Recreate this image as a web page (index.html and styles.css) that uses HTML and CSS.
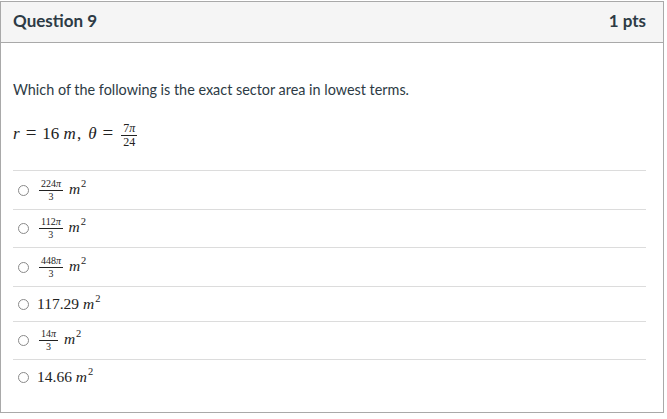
FILE: index.html
```html
<!DOCTYPE html>
<html>
<head>
<meta charset="utf-8">
<link rel="stylesheet" href="styles.css">
</head>
<body>
<div class="card">
  <div class="header">
    <span class="title">Question 9</span>
    <span class="pts">1 pts</span>
  </div>
  <div class="body">
    <p class="prompt">Which of the following is the exact sector area in lowest terms.</p>
    <p class="math given"><i>r</i><span class="rel">=</span>16 <i class="m">m</i>,<span class="sp"></span><i>θ</i><span class="rel">=</span><span class="frac big"><span class="num">7<i>π</i></span><span class="den">24</span></span></p>
    <div class="answers">
      <div class="answer"><span class="radio"></span><span class="math"><span class="frac"><span class="num">224<i>π</i></span><span class="den">3</span></span> <i class="m">m</i><sup>2</sup></span></div>
      <div class="answer a2"><span class="radio"></span><span class="math"><span class="frac"><span class="num">112<i>π</i></span><span class="den">3</span></span> <i class="m">m</i><sup>2</sup></span></div>
      <div class="answer"><span class="radio"></span><span class="math"><span class="frac"><span class="num">448<i>π</i></span><span class="den">3</span></span> <i class="m">m</i><sup>2</sup></span></div>
      <div class="answer plain"><span class="radio"></span><span class="math">117.29 <i class="m">m</i><sup>2</sup></span></div>
      <div class="answer a5"><span class="radio"></span><span class="math"><span class="frac"><span class="num">14<i>π</i></span><span class="den">3</span></span> <i class="m">m</i><sup>2</sup></span></div>
      <div class="answer plain"><span class="radio"></span><span class="math">14.66 <i class="m">m</i><sup>2</sup></span></div>
    </div>
  </div>
</div>
</body>
</html>
```
FILE: styles.css
```css
* { box-sizing: border-box; }
html, body { margin: 0; padding: 0; background: #fff; }
body { font-family: Lato, "Liberation Sans", sans-serif; color: #2d3b45; }
.card {
  width: 664px;
  height: 412px;
  margin-top: 1px;
  border: 1px solid #a9a9a9;
}
.header {
  height: 41px;
  display: flex;
  align-items: flex-start;
  justify-content: space-between;
  padding: 9px 17px 0 12px;
  background: #f5f5f5;
  border-bottom: 1px solid #a9a9a9;
  font-weight: bold;
  font-size: 17px;
  line-height: 20px;
}
.body { padding: 0 17px 0 12px; }
.prompt {
  margin: 37px 0 0 0;
  font-size: 14.4px;
  line-height: 20px;
}
.math {
  font-family: "Liberation Serif", "DejaVu Serif", serif;
  font-size: 15.5px;
  color: #222;
}
.math i { font-style: italic; }
.math .m { letter-spacing: 1px; }
.given { margin: 19px 0 0 0; line-height: 28px; font-size: 17px; }
.rel { margin: 0 6px; font-size: 19px; }
.sp { display: inline-block; width: 7px; }
.frac {
  display: inline-flex;
  flex-direction: column;
  align-items: center;
  vertical-align: middle;
  font-size: 10px;
  line-height: 10px;
  margin: 0 2px;
}
.frac .num { border-bottom: 1px solid #222; padding: 0 2px 1px; }
.frac .den { padding-top: 1px; }
.frac.big { font-size: 12px; line-height: 11px; }
sup { font-size: 10.5px; vertical-align: 7px; line-height: 0; }
.answers { margin-top: 22px; }
.answer {
  display: flex;
  align-items: center;
  border-top: 1px solid #dcdcdc;
  height: 39px;
}
.answer.a2 { height: 38px; }
.answer.plain { height: 35px; }
.answer.a5 { height: 38px; }
.radio {
  width: 11px;
  height: 11px;
  border: 1px solid #8a8a8a;
  border-radius: 50%;
  margin: 0 8px 0 5px;
  flex: none;
}
```
